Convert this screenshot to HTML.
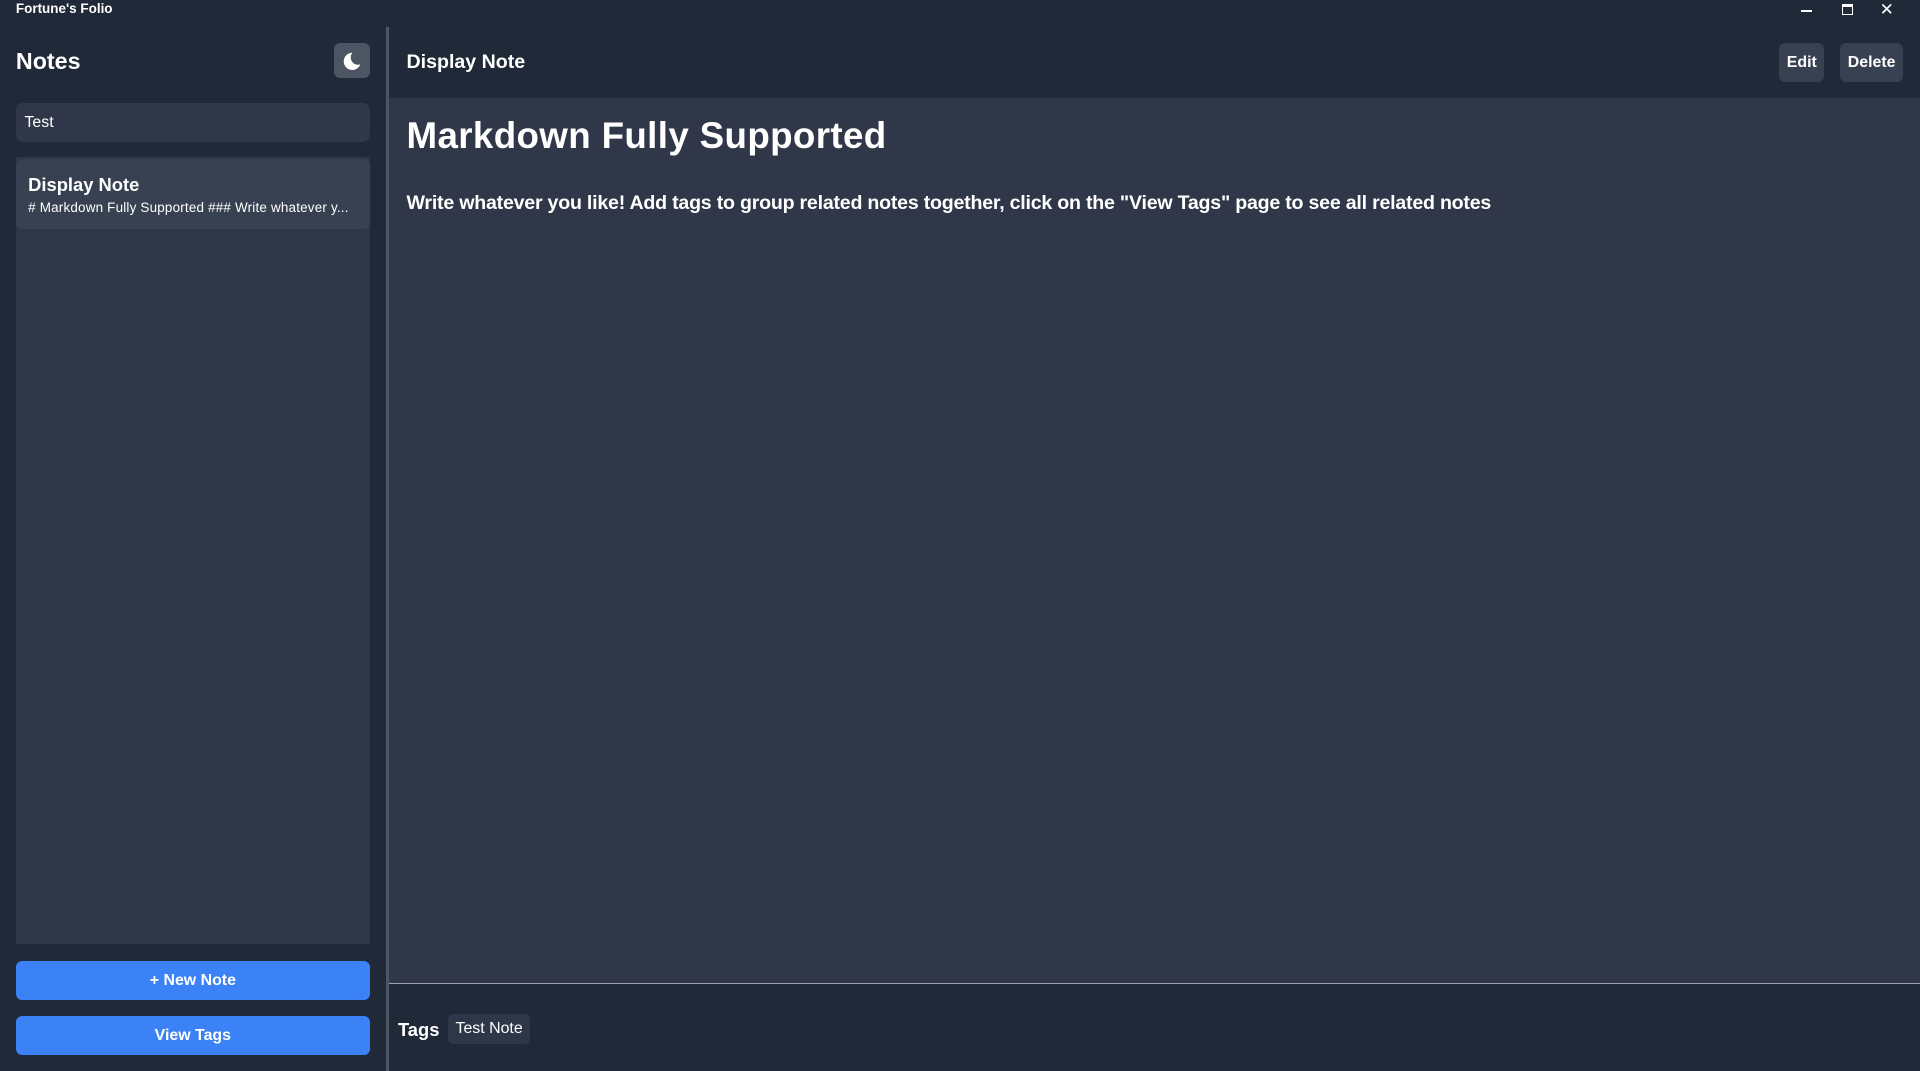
<!DOCTYPE html>
<html><head><meta charset="utf-8"><style>
*{box-sizing:border-box;margin:0;padding:0}
html,body{width:1920px;height:1071px;overflow:hidden;background:#1f2937}
#r{width:1568px;height:875px;position:relative;zoom:1.22449;font-family:"Liberation Sans",sans-serif;color:#fff}
.a{position:absolute}
.btn{background:#3b82f6;border-radius:5px;font-weight:bold;font-size:13px;text-align:center;line-height:32px}
</style></head><body><div id="r">
<div class="a" style="left:13px;top:1px;font-size:11px;font-weight:bold">Fortune's Folio</div>
<div class="a" style="left:1471px;top:8px;width:9px;height:2px;background:#fff"></div>
<div class="a" style="left:1504px;top:3px;width:9px;height:9px;border:1.5px solid #fff;border-top-width:2.5px"></div>
<div class="a" style="left:1535px;top:-1px;font-size:14px">✕</div>
<div class="a" style="left:13px;top:39px;font-size:19px;font-weight:bold">Notes</div>
<div class="a" style="left:273px;top:35px;width:29px;height:29px;background:#4b5563;border-radius:5px"><svg width="29" height="29" viewBox="0 0 29 29"><path d="M15 8a7 7 0 1 0 6.5 9.5a6 6 0 0 1-6.5-9.5z" fill="#fff"/></svg></div>
<div class="a" style="left:13px;top:84px;width:289px;height:32px;background:#2f3748;border-radius:6px;font-size:13px;padding:9px 7px">Test</div>
<div class="a" style="left:13px;top:128px;width:289px;height:643px;background:#2d3748"></div>
<div class="a" style="left:13px;top:130px;width:289px;height:57px;background:#374151;border-radius:5px;padding:12px 10px">
<div style="font-size:15px;font-weight:bold">Display Note</div>
<div style="font-size:11px;margin-top:3px;white-space:nowrap;letter-spacing:0.15px">#&nbsp;Markdown Fully Supported ### Write whatever y...</div></div>
<div class="a btn" style="left:13px;top:785px;width:289px;height:32px">+ New Note</div>
<div class="a btn" style="left:13px;top:830px;width:289px;height:32px">View Tags</div>
<div class="a" style="left:315px;top:22px;width:3px;height:853px;background:#4b5563"></div>
<div class="a" style="left:318px;top:80px;width:1250px;height:723px;background:#2f3748"></div>
<div class="a" style="left:318px;top:803px;width:1250px;height:1px;background:#9ca3af"></div>
<div class="a" style="left:332px;top:42px;font-size:16px;font-weight:bold">Display Note</div>
<div class="a" style="left:1453px;top:35px;width:37px;height:32px;background:#374151;border-radius:5px;font-size:13px;font-weight:bold;text-align:center;line-height:32px">Edit</div>
<div class="a" style="left:1503px;top:35px;width:51px;height:32px;background:#374151;border-radius:5px;font-size:13px;font-weight:bold;text-align:center;line-height:32px">Delete</div>
<div class="a" style="left:332px;top:94px;font-size:30px;font-weight:bold;letter-spacing:0.3px">Markdown Fully Supported</div>
<div class="a" style="left:332px;top:157px;font-size:16px;font-weight:bold;white-space:nowrap;letter-spacing:-0.18px">Write whatever you like! Add tags to group related notes together, click on the "View Tags" page to see all related notes</div>
<div class="a" style="left:325px;top:832px;font-size:15px;font-weight:bold">Tags</div>
<div class="a" style="left:366px;top:828px;height:25px;padding:0 6px;background:#2d3748;border-radius:4px;font-size:13px;line-height:25px">Test Note</div>
</div></body></html>
